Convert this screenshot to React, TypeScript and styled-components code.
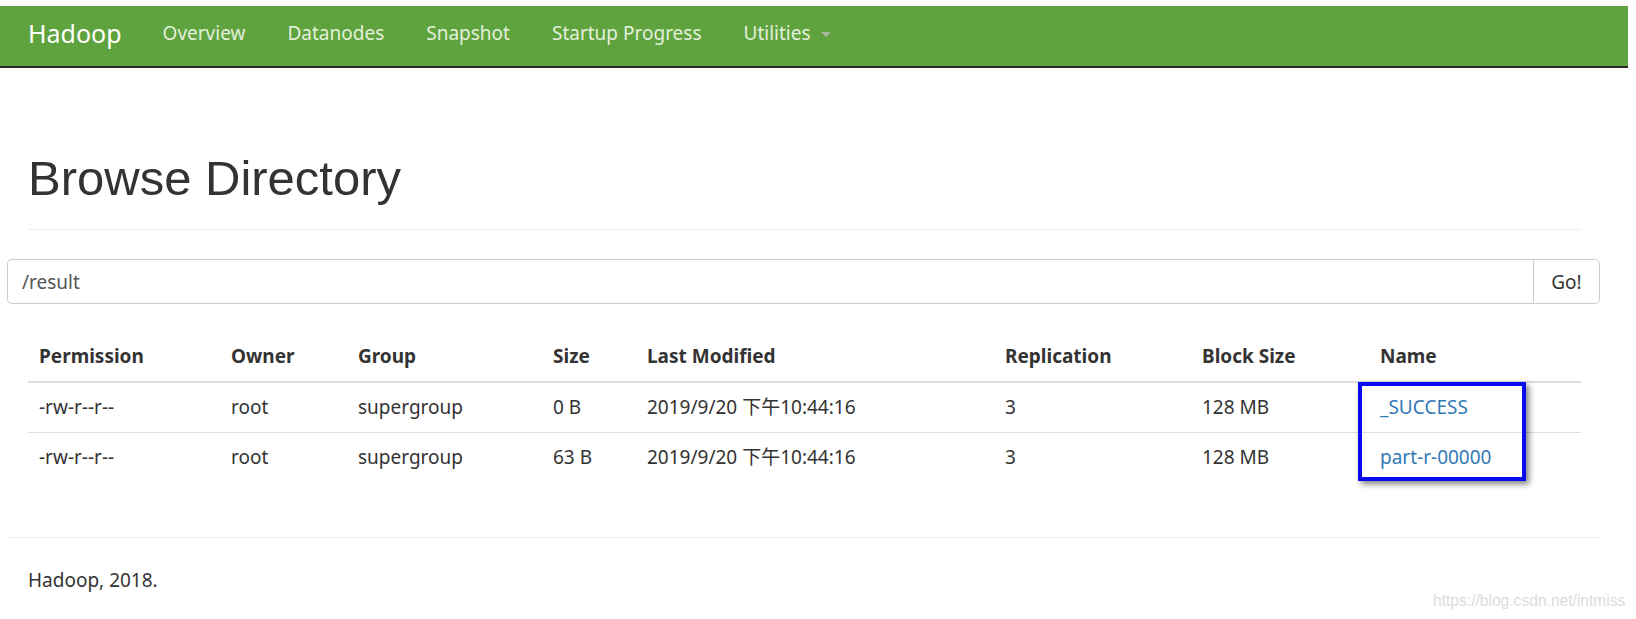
import React from 'react';
import styled, { createGlobalStyle } from 'styled-components';

interface FileRow {
  permission: string;
  owner: string;
  group: string;
  size: string;
  modified: string;
  replication: string;
  blockSize: string;
  name: string;
}

const columns = [
  { label: 'Permission', width: 192 },
  { label: 'Owner', width: 127 },
  { label: 'Group', width: 195 },
  { label: 'Size', width: 94 },
  { label: 'Last Modified', width: 358 },
  { label: 'Replication', width: 197 },
  { label: 'Block Size', width: 178 },
  { label: 'Name', width: 212 },
];

const files: FileRow[] = [
  {
    permission: '-rw-r--r--',
    owner: 'root',
    group: 'supergroup',
    size: '0 B',
    modified: '2019/9/20 下午10:44:16',
    replication: '3',
    blockSize: '128 MB',
    name: '_SUCCESS',
  },
  {
    permission: '-rw-r--r--',
    owner: 'root',
    group: 'supergroup',
    size: '63 B',
    modified: '2019/9/20 下午10:44:16',
    replication: '3',
    blockSize: '128 MB',
    name: 'part-r-00000',
  },
];

const navItems = ['Overview', 'Datanodes', 'Snapshot', 'Startup Progress'];

export default function App() {
  return (
    <>
      <GlobalStyle />
      <Page>
        <NavBar>
          <Brand>Hadoop</Brand>
          {navItems.map(item => (
            <NavLink key={item}>{item}</NavLink>
          ))}
          <NavLink>
            Utilities <Caret />
          </NavLink>
        </NavBar>

        <Container>
          <Content>
            <PageHeader>
              <Title>Browse Directory</Title>
            </PageHeader>
          </Content>

          <InputGroup>
            <PathInput defaultValue="/result" />
            <GoButton>Go!</GoButton>
          </InputGroup>

          <Content>
            <TableWrap>
              <Table>
                <colgroup>
                  {columns.map(c => (
                    <col key={c.label} style={{ width: c.width }} />
                  ))}
                </colgroup>
                <thead>
                  <tr>
                    {columns.map(c => (
                      <Th key={c.label}>{c.label}</Th>
                    ))}
                  </tr>
                </thead>
                <tbody>
                  {files.map((f, i) => (
                    <tr key={f.name}>
                      <Td $first={i === 0}>{f.permission}</Td>
                      <Td $first={i === 0}>{f.owner}</Td>
                      <Td $first={i === 0}>{f.group}</Td>
                      <Td $first={i === 0}>{f.size}</Td>
                      <Td $first={i === 0}>{f.modified}</Td>
                      <Td $first={i === 0}>{f.replication}</Td>
                      <Td $first={i === 0}>{f.blockSize}</Td>
                      <Td $first={i === 0}>
                        <FileLink href="#">{f.name}</FileLink>
                      </Td>
                    </tr>
                  ))}
                </tbody>
              </Table>
              <Highlight />
            </TableWrap>
          </Content>

          <Footer>
            <FooterText>Hadoop, 2018.</FooterText>
          </Footer>
        </Container>

        <Watermark>https://blog.csdn.net/intmiss</Watermark>
      </Page>
    </>
  );
}

const GlobalStyle = createGlobalStyle`
  html, body {
    margin: 0;
    padding: 0;
    background: #fff;
  }
  body {
    font-family: "Noto Sans", "Noto Sans CJK SC", sans-serif;
    font-size: 19px;
    line-height: 27px;
    color: #333;
  }
`;

const Page = styled.div`
  position: relative;
  width: 1628px;
  height: 619px;
  padding-top: 6px;
  box-sizing: border-box;
  overflow: hidden;
`;

const NavBar = styled.nav`
  display: flex;
  align-items: flex-start;
  height: 60px;
  box-sizing: content-box;
  padding: 0 7px;
  background-color: #5fa33e;
  border-bottom: 2px solid #2a2a2a;
`;

const Brand = styled.a`
  padding: 0 20px 0 21px;
  font-size: 25px;
  color: #fff;
  line-height: 55px;
`;

const NavLink = styled.a`
  display: flex;
  align-items: center;
  padding: 0 21px;
  font-size: 19px;
  color: #e4f0dc;
  line-height: 55px;
  white-space: pre;
`;

const Caret = styled.span`
  display: inline-block;
  width: 0;
  height: 0;
  margin-left: 5px;
  margin-top: 2px;
  border-top: 5px solid #a8b8a0;
  border-left: 5px solid transparent;
  border-right: 5px solid transparent;
`;

const Container = styled.div`
  padding: 0 28px 0 7px;
`;

const Content = styled.div`
  padding: 0 19px 0 21px;
`;

const PageHeader = styled.div`
  margin-top: 83px;
  padding-bottom: 24px;
  border-bottom: 1px solid #eee;
`;

const Title = styled.h1`
  margin: 0;
  font-family: "Liberation Sans", Arial, sans-serif;
  font-weight: 400;
  font-size: 49px;
  line-height: 54px;
  color: #333;
`;

const InputGroup = styled.div`
  display: flex;
  margin-top: 29px;
  height: 45px;
`;

const PathInput = styled.input`
  flex: 1;
  min-width: 0;
  height: 45px;
  box-sizing: border-box;
  padding: 0 14px;
  border: 1px solid #ccc;
  border-right: none;
  border-radius: 5px 0 0 5px;
  font-family: "Noto Sans", sans-serif;
  font-size: 19px;
  color: #555;
  outline: none;
`;

const GoButton = styled.button`
  width: 67px;
  height: 45px;
  box-sizing: border-box;
  border: 1px solid #ccc;
  border-radius: 0 5px 5px 0;
  background: #fff;
  font-family: "Noto Sans", sans-serif;
  font-size: 19px;
  color: #333;
  padding: 0;
`;

const TableWrap = styled.div`
  position: relative;
  margin-top: 28px;
`;

const Table = styled.table`
  width: 100%;
  table-layout: fixed;
  border-collapse: collapse;
`;

const Th = styled.th`
  padding: 11px;
  text-align: left;
  font-weight: 700;
  line-height: 27px;
  border-bottom: 2px solid #ddd;
  white-space: nowrap;
`;

const Td = styled.td<{ $first?: boolean }>`
  padding: 11px;
  line-height: 27px;
  border-top: ${p => (p.$first ? 'none' : '1px solid #ddd')};
  white-space: nowrap;
`;

const FileLink = styled.a`
  color: #337ab7;
  text-decoration: none;
`;

const Highlight = styled.div`
  position: absolute;
  left: 1330px;
  top: 50px;
  width: 168px;
  height: 99px;
  box-sizing: border-box;
  border: 4px solid #0a0aee;
  box-shadow: 3px 3px 6px rgba(0, 0, 0, 0.5);
  pointer-events: none;
`;

const Footer = styled.footer`
  margin-top: 55px;
  border-top: 1px solid #eee;
  padding: 29px 21px 0;
`;

const FooterText = styled.p`
  margin: 0;
  line-height: 27px;
`;

const Watermark = styled.span`
  position: absolute;
  left: 1433px;
  top: 591px;
  font-family: "Liberation Sans", Arial, sans-serif;
  font-size: 15.6px;
  line-height: 20px;
  color: #dcdcdc;
`;
